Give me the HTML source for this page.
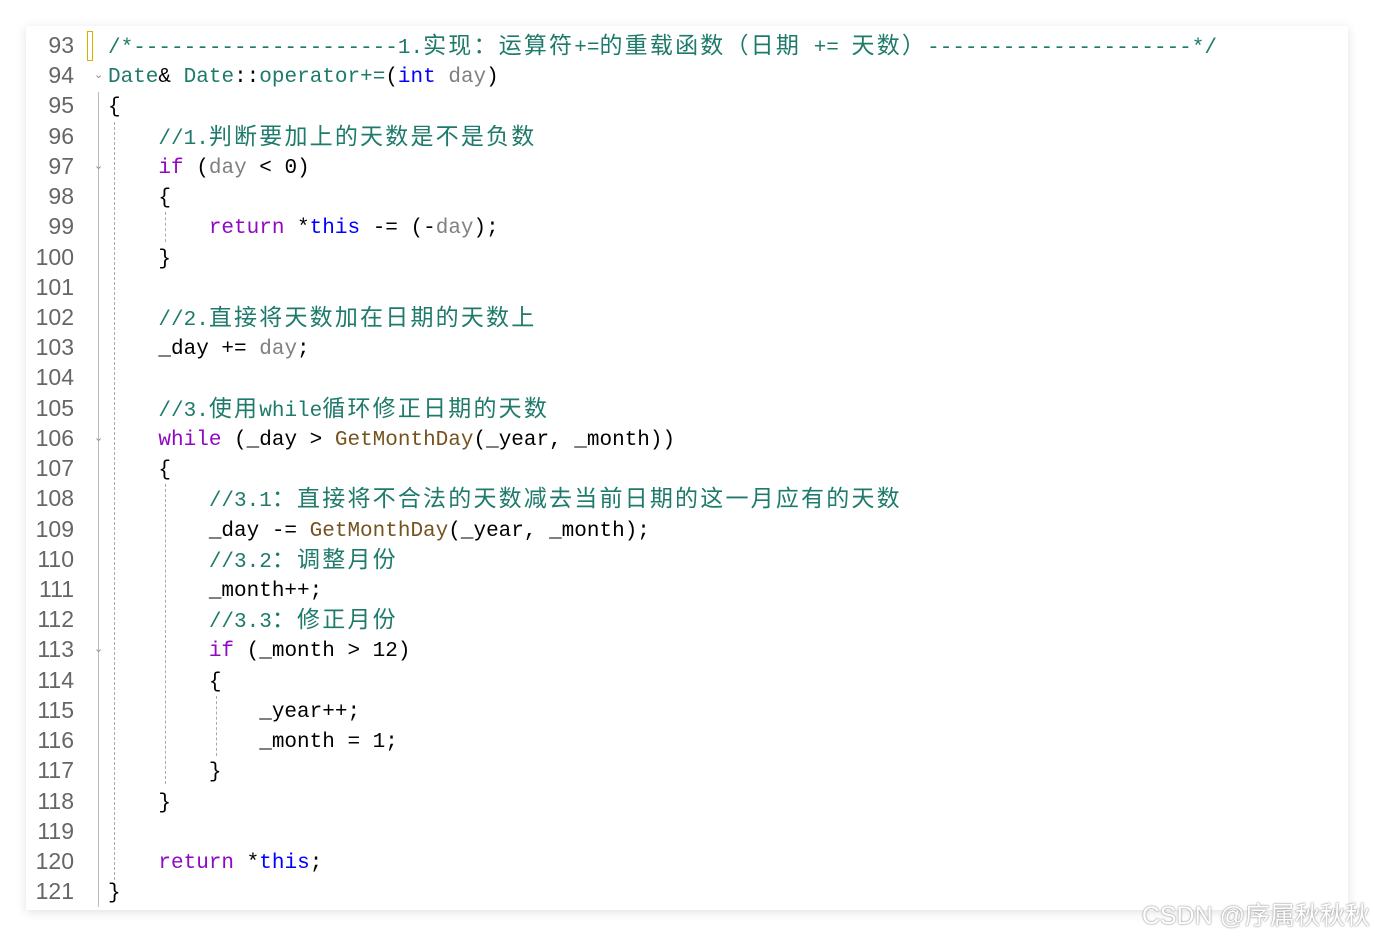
<!DOCTYPE html><html><head><meta charset="utf-8"><style>
body{margin:0;width:1374px;height:936px;background:#fff;position:relative;overflow:hidden}
.card{position:absolute;left:26px;top:26px;width:1322px;height:884px;background:#fff;box-shadow:0 2px 10px rgba(0,0,0,.12)}
.ln{position:absolute;left:30px;width:44px;height:30px;text-align:right;color:#666;font:23px/30px "Liberation Sans",sans-serif}
.code{position:absolute;left:108px;height:30px;white-space:pre;font:21px/30px "Liberation Mono","Noto Sans CJK SC",monospace;color:#000}
.code span{line-height:20px}
.c{color:#1e7a6a}.k{color:#8f08c4}.b{color:#0000ff}.t{color:#1e7a6a}.f{color:#74531f}.p{color:#808080}
.z{font-family:"Noto Sans CJK SC",sans-serif;font-size:23px;letter-spacing:2.2px}
.g{position:absolute;border-left:1px dashed #aaa}
.fm{position:absolute;left:94px;color:#888;font:11px sans-serif}
.wm{position:absolute;right:4px;top:896px;font:25px "Liberation Sans","Noto Sans CJK SC",sans-serif;color:#fff;text-shadow:0 0 2px #999,0 0 1px #888}
</style></head><body><div class="card"></div>
<div style="position:absolute;left:87px;top:31px;width:4px;height:28px;border:1px solid #d4b000"></div>
<div style="position:absolute;left:98px;top:92px;height:815px;border-left:1px solid #bbb"></div>
<div class="g" style="left:114px;top:122px;height:758px"></div>
<div class="g" style="left:165px;top:212px;height:30px"></div>
<div class="g" style="left:165px;top:484px;height:300px"></div>
<div class="g" style="left:216px;top:696px;height:60px"></div>
<div id="L"></div>
<div class="wm">CSDN @序属秋秋秋</div>
<script>
var L=[
'<span class="c">/*---------------------1.<span class="z">实现：运算符</span>+=<span class="z">的重载函数（日期</span> += <span class="z">天数）</span>---------------------*/</span>',
'<span class="t">Date</span>&amp; <span class="t">Date</span>::<span class="t">operator+=</span>(<span class="b">int</span> <span class="p">day</span>)',
'{',
'    <span class="c">//1.<span class="z">判断要加上的天数是不是负数</span></span>',
'    <span class="k">if</span> (<span class="p">day</span> &lt; 0)',
'    {',
'        <span class="k">return</span> *<span class="b">this</span> -= (-<span class="p">day</span>);',
'    }',
'',
'    <span class="c">//2.<span class="z">直接将天数加在日期的天数上</span></span>',
'    _day += <span class="p">day</span>;',
'',
'    <span class="c">//3.<span class="z">使用</span>while<span class="z">循环修正日期的天数</span></span>',
'    <span class="k">while</span> (_day &gt; <span class="f">GetMonthDay</span>(_year, _month))',
'    {',
'        <span class="c">//3.1<span class="z">：直接将不合法的天数减去当前日期的这一月应有的天数</span></span>',
'        _day -= <span class="f">GetMonthDay</span>(_year, _month);',
'        <span class="c">//3.2<span class="z">：调整月份</span></span>',
'        _month++;',
'        <span class="c">//3.3<span class="z">：修正月份</span></span>',
'        <span class="k">if</span> (_month &gt; 12)',
'        {',
'            _year++;',
'            _month = 1;',
'        }',
'    }',
'',
'    <span class="k">return</span> *<span class="b">this</span>;',
'}'];
var h='';for(var i=0;i<L.length;i++){var y=30+i*30.22;
h+='<div class="ln" style="top:'+(y)+'px">'+(93+i)+'</div><div class="code" style="top:'+(y+3)+'px">'+L[i]+'</div>';}
[1,4,13,20].forEach(function(i){h+='<div class="fm" style="top:'+(38+i*30.22)+'px">&#8964;</div>';});
document.getElementById('L').innerHTML=h;
</script></body></html>
